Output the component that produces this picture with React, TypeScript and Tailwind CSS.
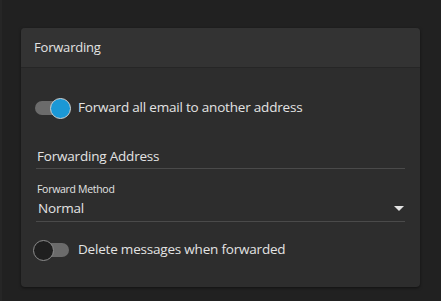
import React from "react";

function Toggle({ on }: { on: boolean }) {
  return (
    <div className="relative w-[38px] h-[20px] flex items-center">
      <div className="ml-[2px] w-[34px] h-[14px] rounded-full bg-[#6b6b6b]" />
      {on ? (
        <div className="absolute left-[17px] top-0 w-[21px] h-[21px] rounded-full bg-[#1b98d6] border border-[#d0d0d0]" />
      ) : (
        <div className="absolute left-0 top-0 w-[21px] h-[21px] rounded-full bg-[#1f1f1f] border border-[#8c8c8c]" />
      )}
    </div>
  );
}

export default function App() {
  const font = { fontFamily: '"Open Sans", "Noto Sans", sans-serif' };
  return (
    <div className="w-[441px] h-[301px] bg-[#212121] flex text-[#e3e3e3]" style={font}>
      <div className="w-[2px] h-full bg-[#262626]" />
      <div className="ml-[19px] mt-[28px] w-[399px] h-[259px] rounded-[4px] bg-[#2d2d2d] shadow-[0_1px_3px_rgba(0,0,0,0.5)] flex flex-col overflow-hidden">
        <div className="h-[40px] bg-[#333333] border-b border-[#262626] flex items-center pl-[13px] pt-[1px] text-[13px] tracking-[-0.2px]">
          Forwarding
        </div>
        <div className="flex flex-col pl-[12px] pr-[15px] pt-[29px]">
          <div className="flex items-center h-[21px]">
            <Toggle on />
            <span className="ml-[7px] text-[13.5px] tracking-[-0.2px]">Forward all email to another address</span>
          </div>
          <div className="mt-[26px] ml-[3px] h-[25px] border-b border-[#4a4a4a] flex items-center pl-[1px] text-[13.5px] tracking-[-0.2px]">
            Forwarding Address
          </div>
          <div className="mt-[14px] ml-[3px] pl-[1px] text-[10.5px] leading-[13px] tracking-[-0.3px]">Forward Method</div>
          <div className="ml-[3px] h-[26px] border-b border-[#4a4a4a] flex items-center justify-between pl-[2px] pr-[1px]">
            <span className="text-[13.5px] tracking-[-0.2px]">Normal</span>
            <svg width="10" height="5" viewBox="0 0 10 5" className="mb-[1px]">
              <path d="M0 0 L10 0 L5 5 Z" fill="#e3e3e3" />
            </svg>
          </div>
          <div className="mt-[17px] flex items-center h-[21px]">
            <Toggle on={false} />
            <span className="ml-[7px] text-[13.5px] tracking-[-0.2px]">Delete messages when forwarded</span>
          </div>
        </div>
      </div>
    </div>
  );
}
